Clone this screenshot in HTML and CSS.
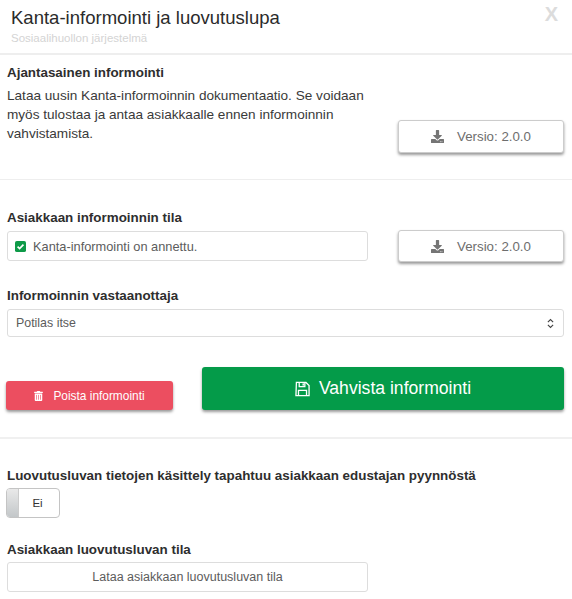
FILE: index.html
```html
<!DOCTYPE html>
<html lang="fi">
<head>
<meta charset="utf-8">
<title>Kanta-informointi ja luovutuslupa</title>
<link rel="stylesheet" href="styles.css">
</head>
<body>
<header class="head">
  <div class="head-text">
    <h1 class="title">Kanta-informointi ja luovutuslupa</h1>
    <p class="subtitle">Sosiaalihuollon järjestelmä</p>
  </div>
  <span class="close">X</span>
</header>

<section class="sec sec-info">
  <div class="two">
    <div class="info-text">
      <h2 class="label">Ajantasainen informointi</h2>
      <p class="lead">Lataa uusin Kanta-informoinnin dokumentaatio. Se voidaan myös tulostaa ja antaa asiakkaalle ennen informoinnin vahvistamista.</p>
    </div>
    <button class="btn-version">
      <svg class="ic-dl" viewBox="0 0 512 512"><path d="M216 0h80c13.3 0 24 10.7 24 24v168h87.7c17.8 0 26.7 21.5 14.1 34.1L269.7 378.3c-7.5 7.5-19.8 7.5-27.3 0L90.1 226.1c-12.6-12.6-3.7-34.1 14.1-34.1H192V24c0-13.3 10.7-24 24-24zm296 376v112c0 13.3-10.7 24-24 24H24c-13.3 0-24-10.7-24-24V376c0-13.3 10.7-24 24-24h146.7l49 49c20.1 20.1 52.5 20.1 72.6 0l49-49H488c13.3 0 24 10.7 24 24zm-124 88c0-11-9-20-20-20s-20 9-20 20 9 20 20 20 20-9 20-20zm64 0c0-11-9-20-20-20s-20 9-20 20 9 20 20 20 20-9 20-20z"/></svg>
      <span>Versio: 2.0.0</span>
    </button>
  </div>
</section>

<section class="sec sec-state">
  <h2 class="label">Asiakkaan informoinnin tila</h2>
  <div class="two two-center gap-s">
    <div class="box box-check">
      <svg class="ic-check" viewBox="0 0 12 12"><rect width="12" height="12" rx="2" fill="#0e9a48"/><path d="M2.8 6.2 5 8.3 9.2 3.9" fill="none" stroke="#fff" stroke-width="1.8"/></svg>
      <span>Kanta-informointi on annettu.</span>
    </div>
    <button class="btn-version btn-version-s">
      <svg class="ic-dl" viewBox="0 0 512 512"><path d="M216 0h80c13.3 0 24 10.7 24 24v168h87.7c17.8 0 26.7 21.5 14.1 34.1L269.7 378.3c-7.5 7.5-19.8 7.5-27.3 0L90.1 226.1c-12.6-12.6-3.7-34.1 14.1-34.1H192V24c0-13.3 10.7-24 24-24zm296 376v112c0 13.3-10.7 24-24 24H24c-13.3 0-24-10.7-24-24V376c0-13.3 10.7-24 24-24h146.7l49 49c20.1 20.1 52.5 20.1 72.6 0l49-49H488c13.3 0 24 10.7 24 24zm-124 88c0-11-9-20-20-20s-20 9-20 20 9 20 20 20 20-9 20-20zm64 0c0-11-9-20-20-20s-20 9-20 20 9 20 20 20 20-9 20-20z"/></svg>
      <span>Versio: 2.0.0</span>
    </button>
  </div>
  <h2 class="label label-mid">Informoinnin vastaanottaja</h2>
  <div class="box box-select">
    <span>Potilas itse</span>
    <svg class="ic-updown" viewBox="0 0 8 12"><path d="M1 4.4 4 1.4 7 4.4M1 7.6 4 10.6 7 7.6" fill="none" stroke="#444" stroke-width="1.3"/></svg>
  </div>
  <div class="actions">
    <button class="btn btn-red">
      <svg class="ic-trash" viewBox="0 0 448 512"><path d="M32 464a48 48 0 0 0 48 48h288a48 48 0 0 0 48-48V128H32zm272-256a16 16 0 0 1 32 0v224a16 16 0 0 1-32 0zm-96 0a16 16 0 0 1 32 0v224a16 16 0 0 1-32 0zm-96 0a16 16 0 0 1 32 0v224a16 16 0 0 1-32 0zM432 32H312l-9.4-18.7A24 24 0 0 0 281.1 0H166.8a23.72 23.72 0 0 0-21.4 13.3L136 32H16A16 16 0 0 0 0 48v32a16 16 0 0 0 16 16h416a16 16 0 0 0 16-16V48a16 16 0 0 0-16-16z"/></svg>
      <span>Poista informointi</span>
    </button>
    <button class="btn btn-green">
      <svg class="ic-save" viewBox="0 0 16 16"><path d="M1.5 1h10.2L15 4.3V15H1Z M4.5 1.5v4h6v-4 M3.7 14.5V9.5h8.6v5" fill="none" stroke="#fff" stroke-width="1.4"/><rect x="8" y="2" width="1.5" height="2.4" fill="#fff"/></svg>
      <span>Vahvista informointi</span>
    </button>
  </div>
</section>

<section class="sec sec-consent">
  <h2 class="label">Luovutusluvan tietojen käsittely tapahtuu asiakkaan edustajan pyynnöstä</h2>
  <div class="toggle"><span class="knob"></span><span class="toggle-text">Ei</span></div>
  <h2 class="label label-low">Asiakkaan luovutusluvan tila</h2>
  <div class="two gap-s">
    <div class="box box-load">Lataa asiakkaan luovutusluvan tila</div>
  </div>
</section>
</body>
</html>
```

FILE: styles.css
```css
* { box-sizing: border-box; }

html, body {
  margin: 0;
  padding: 0;
  background: #fff;
}

body {
  width: 572px;
  height: 599px;
  overflow: hidden;
  font-family: "Liberation Sans", Arial, sans-serif;
  color: #333;
}

.head {
  height: 55px;
  padding: 8px 14px 0 11px;
  display: flex;
  justify-content: space-between;
  border-bottom: 2px solid #eee;
}

.title {
  margin: 0;
  font-size: 18.55px;
  line-height: 20px;
  font-weight: 400;
  color: #2b2b2b;
}

.subtitle {
  margin: 2px 0 0;
  font-size: 11.5px;
  line-height: 16px;
  color: #d4d4d4;
}

.close {
  font-size: 20px;
  line-height: 20px;
  margin-top: -4px;
  font-weight: 700;
  color: #dcdcdc;
}

.sec {
  padding-left: 7px;
  padding-right: 8px;
}

.sec-info {
  padding-top: 8px;
  padding-bottom: 26px;
  border-bottom: 1px solid #eee;
}

.sec-state {
  padding-top: 28px;
  padding-bottom: 27px;
  border-bottom: 2px solid #f0f0f0;
}

.sec-consent {
  padding-top: 27px;
}

.label {
  margin: 0 0 -2px;
  font-size: 13.4px;
  line-height: 20px;
  font-weight: 700;
  color: #2e2e2e;
}

.label-mid {
  margin-top: 24px;
}

.label-low {
  margin-top: 22px;
}

.info-text {
  padding-bottom: 10px;
}

.lead {
  margin: 5px 0 0;
  font-size: 13.6px;
  line-height: 19px;
  color: #3a3a3a;
}

.two {
  display: grid;
  grid-template-columns: 361px 166px;
  column-gap: 30px;
  align-items: end;
}

.two-center {
  align-items: center;
}

.gap-s {
  margin-top: 4px;
}

.btn-version {
  height: 33px;
  padding: 0;
  background: #fff;
  border: 1px solid #ccc;
  border-radius: 3px;
  box-shadow: 0 2px 3px rgba(0, 0, 0, 0.4);
  display: flex;
  align-items: center;
  justify-content: center;
  gap: 13px;
  font: 13.3px "Liberation Sans", Arial, sans-serif;
  color: #6e6e6e;
}

.btn-version-s {
  height: 32px;
}

.ic-dl {
  width: 13px;
  height: 13px;
  fill: #757575;
}

.box {
  border: 1px solid #ddd;
  border-radius: 3px;
  background: #fff;
  color: #5c5c5c;
  display: flex;
  align-items: center;
}

.box-check {
  height: 30px;
  padding-left: 7px;
  gap: 7px;
  font-size: 12.8px;
}

.ic-check {
  width: 11px;
  height: 11px;
}

.box-select {
  height: 28px;
  margin-top: 5px;
  padding: 0 9px 0 8px;
  justify-content: space-between;
  font-size: 12.4px;
}

.ic-updown {
  width: 7px;
  height: 11px;
}

.actions {
  margin-top: 30px;
  display: grid;
  grid-template-columns: 167px 362px;
  column-gap: 29px;
  margin-left: -1px;
  align-items: end;
}

.btn {
  padding: 0;
  border: 0;
  border-radius: 3px;
  color: #fff;
  display: flex;
  align-items: center;
  justify-content: center;
  box-shadow: 0 2px 3px rgba(0, 0, 0, 0.4);
  font-family: "Liberation Sans", Arial, sans-serif;
}

.btn-red {
  height: 29px;
  background: #ec4e60;
  font-size: 11.9px;
  gap: 10px;
}

.ic-trash {
  width: 9px;
  height: 10px;
  fill: #fff;
}

.btn-green {
  height: 43px;
  background: #049b49;
  font-size: 17.6px;
  gap: 9px;
}

.ic-save {
  width: 15px;
  height: 16px;
}

.toggle {
  width: 54px;
  height: 30px;
  margin-top: 4px;
  margin-left: -1px;
  border: 1px solid #c4c4c4;
  border-radius: 4px;
  display: flex;
  overflow: hidden;
  background: #fff;
}

.knob {
  width: 12px;
  background: linear-gradient(to bottom, #e9e9e9, #c3c7c9);
  border-right: 1px solid #ccc;
}

.toggle-text {
  flex: 1;
  display: flex;
  align-items: center;
  justify-content: center;
  padding-right: 3px;
  font-size: 11.5px;
  color: #333;
}

.box-load {
  height: 30px;
  justify-content: center;
  font-size: 12.5px;
}
```
